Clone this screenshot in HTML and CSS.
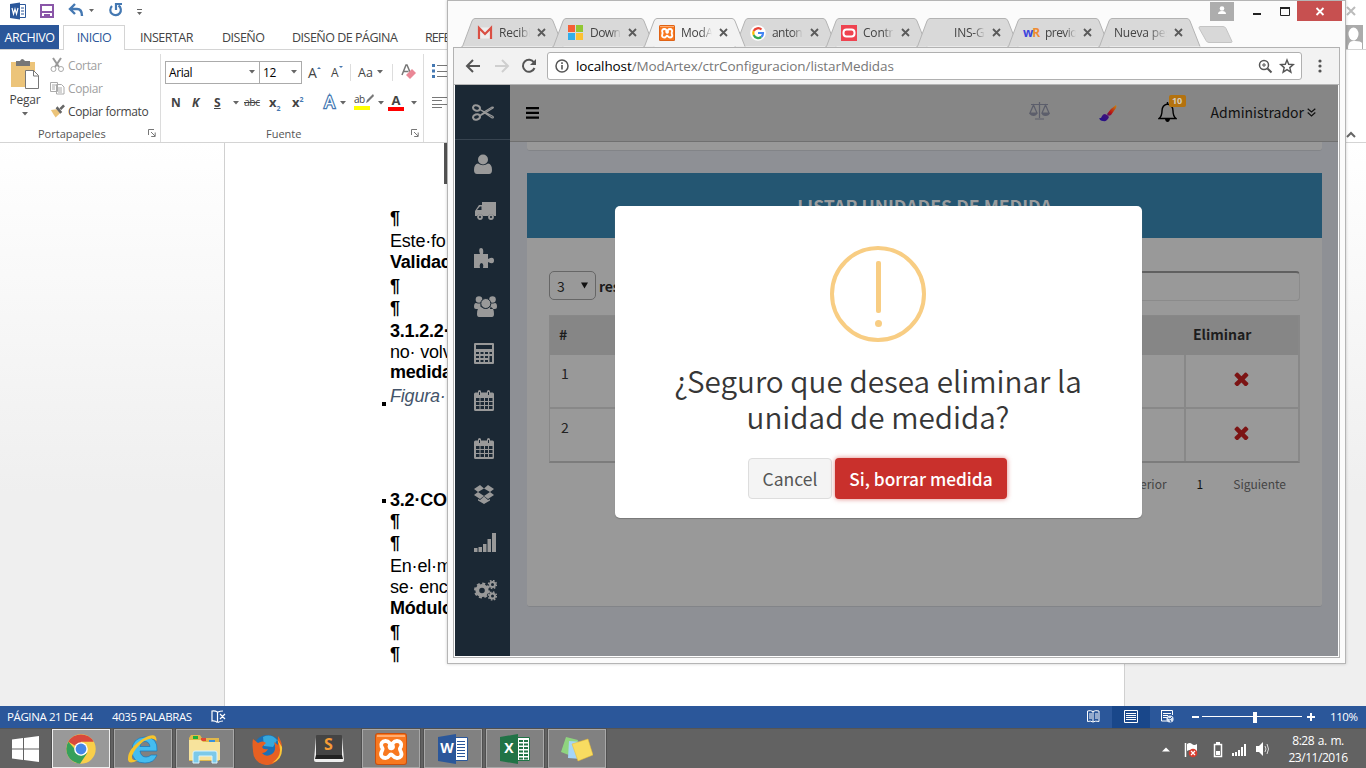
FILE: index.html
```html
<!DOCTYPE html>
<html lang="es">
<head>
<meta charset="utf-8">
<title>Escritorio</title>
<link rel="stylesheet" href="styles.css">
</head>
<body>
<svg width="0" height="0" class="defs" aria-hidden="true">
  <defs>
    <symbol id="caret" viewBox="0 0 7 4"><path d="M0 0h6L3 3.5z" fill="#666"/></symbol>
    <symbol id="close" viewBox="0 0 9 9"><path d="M1 1l7 7M8 1l-7 7" stroke="#5a5a5a" stroke-width="1.8"/></symbol>
    <symbol id="launcher" viewBox="0 0 8 8"><path d="M.5 6V.5H6M3 3l4 4M7.200 3.500v4h-4" fill="none" stroke="#777"/></symbol>
    <symbol id="tab" viewBox="0 0 104 29"><path d="M.5 28.500h1L11 3q1-2.500 3-2.500h75q2 0 3 2.500l10 25.500" stroke="#b3b3b3"/></symbol>
    <symbol id="calendar" viewBox="0 0 20 21"><path d="M0 4q0-1.500 1.500-1.500H4V1.500a1.500 1.500 0 013 0v1h6v-1a1.500 1.500 0 013 0v1h2.500Q20 2.500 20 4v15.500q0 1.500-1.500 1.500h-17Q0 21 0 19.500z" fill="#999"/><path d="M2 8h3.500v3H2zm4.500 0H10v3H6.500zM11 8h3v3h-3zm4 0h3.500v3H15zM2 12h3.500v3H2zm4.500 0H10v3H6.500zm4.500 0h3v3h-3zm4 0h3.500v3H15zM2 16h3.500v3H2zm4.500 0H10v3H6.500zm4.500 0h3v3h-3zm4 0h3.500v3H15zM5 2h1v3H5zm9 0h1v3h-1z" fill="#1b2834"/></symbol>
    <symbol id="times" viewBox="110 110 1200 1200"><path d="M1298 1106q0 40-28 68l-136 136q-28 28-68 28t-68-28l-294-294-294 294q-28 28-68 28t-68-28l-136-136q-28-28-28-68t28-68l294-294-294-294q-28-28-28-68t28-68l136-136q28-28 68-28t68 28l294 294 294-294q28-28 68-28t68 28l136 136q28 28 28 68t-28 68l-294 294 294 294q28 28 28 68z" fill="#7c1414"/></symbol>
    <symbol id="xampp" viewBox="0 0 32 32"><rect width="32" height="32" rx="3" fill="#c94f0d"/><rect x="1" y="1" width="30" height="30" rx="2" fill="#f8781f"/><path d="M2 2h28v2H2z" fill="#ffad72"/><path d="M14.500 13.500C16 11 14 8 10.500 8S5.500 11 6.500 13.500C8 16 8 16 6.500 19c-1.500 4 1 6 4 6 4 0 3.500-3.500 5.500-3.500S18 25 22 25c3.500 0 5.500-2.500 4-6-1.500-3-1.500-3 0-5.500C27 11 25.500 8 22 8s-5.500 3-4 5.500c.5 2-3 3-3.500 0z" fill="none" stroke="#fff" stroke-width="3.800" stroke-linejoin="round"/></symbol>
  </defs>
</svg>

<div class="desktop">
  <section class="word">
    <header class="quickbar">
      <svg width="150" height="22" viewBox="0 0 150 22">
        <path d="M10 4l10-1.500v17L10 18z" fill="#2b579a"/><path d="M20 4.500h5.500v13H20" fill="#fff" stroke="#2b579a"/><path d="M21 8h3m-3 3h3m-3 3h3" stroke="#2b579a"/>
        <path d="M12 8l1.500 6L15 9l1.500 5L18 8" fill="none" stroke="#fff" stroke-width="1.200"/>
        <path d="M41 5h12v12H41z" fill="#fff" stroke="#8a56a8" stroke-width="2"/><path d="M42 11h10v2H42zM44 14h6v4h-6z" fill="#8a56a8"/>
        <path d="M75 4l-5 5 5 5M70 9h7q5 0 5 7" fill="none" stroke="#4478b2" stroke-width="2.400"/>
        <path d="M89 9h5l-2.500 3zM137 12h5l-2.500 3zM137 9h5v1h-5z" fill="#666"/>
        <path d="M112 6a5.300 5.300 0 106.500-.5" fill="none" stroke="#4478b2" stroke-width="2.200"/><path d="M122 4h-6v6" fill="none" stroke="#4478b2" stroke-width="2.200"/>
      </svg>
      <svg width="20" height="22" viewBox="0 0 20 22"><path d="M1 7l8 8m0-8l-8 8" stroke="#bbb" stroke-width="2"/></svg>
    </header>
    <nav class="word-tabs">
      <span class="wt file">ARCHIVO</span><span class="wt home">INICIO</span><span class="wt insert">INSERTAR</span><span class="wt design">DISEÑO</span><span class="wt pagelay">DISEÑO DE PÁGINA</span><span class="wt refs">REFERENCIAS</span>
      <svg class="avatar" width="20" height="24" viewBox="0 0 20 24"><path d="M0 0h17v24H0z" fill="#ababab"/><path d="M2 24q0-8 5-8 3-1 2 0 6 0 7 2v6z" fill="#fff"/><ellipse cx="7.500" cy="9" rx="5" ry="6.500" fill="#fff"/></svg>
    </nav>
    <div class="ribbon">
      <div class="group clip">
        <div class="tools">
          <div class="paste">
            <svg width="30" height="32" viewBox="0 0 30 32"><path d="M1 4h24v25H1z" fill="#ecc47a"/><path d="M6 3h4q2-4 5 0h5v5H6z" fill="#777"/><path d="M15.500 12.500h8l5 5v13h-13z" fill="#fff" stroke="#777"/><path d="M23.500 12v6h5" fill="none" stroke="#777"/></svg>
            <span>Pegar</span><svg class="pc" width="7" height="4"><use href="#caret"/></svg>
          </div>
          <div class="cmds">
            <div class="cmd off"><svg width="15" height="16" viewBox="0 0 15 16"><path d="M3 1l6 9M11 1L5 10" stroke="#999" stroke-width="2"/><circle cx="3.500" cy="12" r="2.500" fill="none" stroke="#aaa"/><circle cx="11" cy="12" r="2.500" fill="none" stroke="#aaa"/></svg><span>Cortar</span></div>
            <div class="cmd off"><svg width="15" height="14" viewBox="0 0 15 14"><path d="M.5 1.500h7v9h-7zM6.500 3.500h5l2.500 2.500v7H6.500z" fill="#fff" stroke="#aaa"/><path d="M2 4h4M2 6h3M2 8h3m3-1h4M8 9h4M8 11h4" stroke="#aaa"/></svg><span>Copiar</span></div>
            <div class="cmd"><svg width="15" height="15" viewBox="0 0 16 15"><path d="M1 6l6-1 4 4-5 5-2-3z" fill="#ecc47a"/><path d="M6 4l2-2 5 6-2 2zM10 4l4-4 2 2-4 4z" fill="#666"/></svg><span>Copiar formato</span></div>
          </div>
        </div>
        <div class="glabel"><span>Portapapeles</span><svg width="8" height="8"><use href="#launcher"/></svg></div>
      </div>
      <div class="group font">
        <div class="frow1">
          <span class="combo face">Arial<svg width="7" height="4"><use href="#caret"/></svg></span><span class="combo size">12<svg width="7" height="4"><use href="#caret"/></svg></span>
          <span class="grow">A<i class="up"></i></span><span class="shrink">A<i class="down"></i></span>
          <span class="case">Aa <svg width="7" height="4"><use href="#caret"/></svg></span>
          <svg class="eraser" width="16" height="16" viewBox="0 0 16 16"><path d="M1 11L5 1h1l3 7M2.500 7.500h5" fill="none" stroke="#777" stroke-width="1.500"/><path d="M5 11l6-6 4 4-6 6z" fill="#ea8796"/></svg>
        </div>
        <div class="frow2">
          <b>N</b><b><em>K</em></b><b class="und">S</b><svg width="7" height="4"><use href="#caret"/></svg><s>abc</s><b class="big">x<sub>2</sub></b><b class="big">x<sup>2</sup></b><span class="effect">A</span><svg width="7" height="4"><use href="#caret"/></svg>
          <span class="mark">ab<svg width="10" height="10" viewBox="0 0 10 10"><path d="M1 9l1-3 6-6 1 2-6 6z" fill="#777"/></svg></span><svg width="7" height="4"><use href="#caret"/></svg><b class="red">A</b><svg width="7" height="4"><use href="#caret"/></svg>
        </div>
        <div class="glabel"><span>Fuente</span><svg width="8" height="8"><use href="#launcher"/></svg></div>
      </div>
      <svg class="para" width="24" height="60" viewBox="0 0 24 60"><path d="M0 2h3v3H0zm0 5.500h3v3H0zM0 13h3v3H0z" fill="#4478b2"/><path d="M5 3.500h12M5 9.500h12M5 14.500h12M0 35.500h16M0 38.500h10M0 42.500h16M0 45.500h10" stroke="#777"/></svg>
      <svg class="collapse" width="10" height="7" viewBox="0 0 10 7"><path d="M1 6l4-4 4 4" fill="none" stroke="#666" stroke-width="2"/></svg>
    </div>
    <div class="canvas">
      <article class="page">
        <div class="band"></div>
        <p class="first"><b>¶</b></p><p class="g1">Este·fo</p><p class="n1"><b>Validac</b></p><p class="g2"><b>¶</b></p><p><b>¶</b></p><p class="g1"><b>3.1.2.2·</b></p><p class="n1">no·&nbsp;volv</p><p class="n2"><b>medida</b></p><p class="g2 fig">Figura·</p>
        <p class="section dot"><b>3.2·CO</b></p><p class="n1"><b>¶</b></p><p><b>¶</b></p><p class="g1">En·el·m</p><p class="n1">se·&nbsp;enc</p><p class="n1"><b>Módulo</b></p><p class="g2"><b>¶</b></p><p><b>¶</b></p>
      </article>
    </div>
    <footer class="status">
      <span class="pg">PÁGINA 21 DE 44</span><span class="words">4035 PALABRAS</span>
      <svg width="16" height="14" viewBox="0 0 16 14"><path d="M6.500 1.500v11M6.500 2Q4 .5 1 1v10q3-.5 5.500 1.500M7 2q2-1 5-1M7 12.500q2-1.500 5-1.500M9 4l5 5m0-5L9 9" fill="none" stroke="#fff" stroke-width="1.200"/></svg>
      <div class="views">
        <svg width="38" height="22" viewBox="0 0 38 22"><path d="M13.500 5q3-1 5.500.5Q21.500 4 25 5v10.500q-3.500-1-6 .5-2.500-1.500-5.500-.5zM19 5v11M15 8h3m-3 2h3m-3 2h3m3-4h3m-3 2h3m-3 2h3" fill="none" stroke="#fff"/></svg>
        <svg class="on" width="38" height="22" viewBox="0 0 38 22"><path d="M12.500 4.500h13v12h-13zM14 7.500h10M14 9.500h10m-10 2h10m-10 2h10" fill="none" stroke="#fff"/></svg>
        <svg width="38" height="22" viewBox="0 0 38 22"><path d="M11 4.500h11.500V9M11.500 4v11h6M13 7.500h8m-8 2h5m-5 2h4" fill="none" stroke="#fff"/><circle cx="20" cy="13" r="3.600" fill="#dce6f4"/><path d="M18 12l2 1 2-2m-2 3l1 2" fill="none" stroke="#2b579a"/></svg>
        <svg width="130" height="22" viewBox="0 0 130 22"><path d="M4 10h7v2H4zm115 0h8v2h-8zm3-3h2v8h-2zM65 6h4v11h-4z" fill="#fff"/><path d="M14 10.500h100" stroke="#fff"/></svg>
      </div>
      <span class="zoom">110%</span>
    </footer>
  </section>

  <section class="chrome">
    <div class="strip">
      <div class="tabs">
        <div class="tab"><svg class="shape"><use href="#tab"/></svg><svg class="fav" width="16" height="16" viewBox="0 0 16 16"><path d="M1 2.500h14v11H1z" fill="#eee"/><path d="M2 14V3l6 6 6-6v11" fill="none" stroke="#da4f43" stroke-width="2.200"/></svg><span class="t">Recibidos</span><svg class="x"><use href="#close"/></svg></div>
        <div class="tab"><svg class="shape"><use href="#tab"/></svg><svg class="fav" width="16" height="16" viewBox="0 0 16 16"><path d="M0 0h7v7H0z" fill="#f65f35"/><path d="M8 0h7v7H8z" fill="#91c733"/><path d="M0 8h7v7H0z" fill="#32aeea"/><path d="M8 8h7v7H8z" fill="#fdc131"/></svg><span class="t tight">Download</span><svg class="x"><use href="#close"/></svg></div>
        <div class="tab active"><svg class="shape"><use href="#tab"/></svg><svg class="fav" width="16" height="16"><use href="#xampp"/></svg><span class="t">ModArtex</span><svg class="x"><use href="#close"/></svg></div>
        <div class="tab"><svg class="shape"><use href="#tab"/></svg><svg class="fav" width="16" height="16" viewBox="0 0 16 16"><circle cx="8" cy="8" r="7.800" fill="#fff"/><g fill="none" stroke-width="2.200"><path d="M11.500 4.500A5 5 0 003.700 6" stroke="#ea4335"/><path d="M3.700 6a5 5 0 000 4" stroke="#fbbc05"/><path d="M3.700 10a5 5 0 007.600 2" stroke="#34a853"/><path d="M11.300 12A5 5 0 0013 8H8" stroke="#4285f4"/></g></svg><span class="t tight">antonio m</span><svg class="x"><use href="#close"/></svg></div>
        <div class="tab"><svg class="shape"><use href="#tab"/></svg><svg class="fav" width="16" height="16" viewBox="0 0 16 16"><path d="M0 0h16v16H0z" fill="#ef4350"/><rect x="2.500" y="4.500" width="11" height="7" rx="3" fill="none" stroke="#fff" stroke-width="2"/></svg><span class="t">Controlar</span><svg class="x"><use href="#close"/></svg></div>
        <div class="tab"><svg class="shape"><use href="#tab"/></svg><span class="fav"></span><span class="t">INS-GUIA</span><svg class="x"><use href="#close"/></svg></div>
        <div class="tab"><svg class="shape"><use href="#tab"/></svg><span class="fav wr"><i>w</i>R</span><span class="t tight">previous</span><svg class="x"><use href="#close"/></svg></div>
        <div class="tab plain"><svg class="shape"><use href="#tab"/></svg><span class="t">Nueva pestaña</span><svg class="x"><use href="#close"/></svg></div>
        <svg class="newtab" width="36" height="18" viewBox="0 0 36 18"><path d="M2 .5h23q2 0 3 2l6 13q0 1-1 1H11q-2 0-3-2L1 2q0-1.500 1-1.500z" fill="#d8d8d8" stroke="#c4c4c4"/></svg>
      </div>
      <div class="winctl">
        <svg width="133" height="20" viewBox="0 0 133 20"><path d="M0 1h24v19H0z" fill="#adadad"/><circle cx="12" cy="7.500" r="2.300" fill="#fff"/><path d="M8 13q0-3 4-3t4 3z" fill="#fff"/><path d="M43 12h8v2h-8z" fill="#222"/><path d="M70.500 7v7.500h9V7" fill="none" stroke="#222"/><path d="M70 6h10v2H70z" fill="#222"/><path d="M87 0h45v20H87z" fill="#c75050"/><path d="M106.500 7l7 7m0-7l-7 7" stroke="#fff" stroke-width="1.800"/></svg>
      </div>
    </div>
    <div class="frame">
      <div class="toolbar">
        <svg width="93" height="36" viewBox="0 0 93 36"><path d="M26 18H13m6-6l-6 6 6 6" fill="none" stroke="#555" stroke-width="2"/><path d="M41 18h13m-6-6l6 6-6 6" fill="none" stroke="#cfcfcf" stroke-width="2"/><path d="M80 14.500a6 6 0 10.500 5.500" fill="none" stroke="#555" stroke-width="2"/><path d="M82 11v6h-6z" fill="#555"/></svg>
        <div class="omni">
          <svg width="14" height="14" viewBox="0 0 14 14"><circle cx="7" cy="7" r="6" fill="none" stroke="#555" stroke-width="1.500"/><path d="M6.200 6h1.600v4.500H6.200zM6.200 3.300h1.600V5H6.200z" fill="#555"/></svg>
          <span class="url"><b>localhost</b>/ModArtex/ctrConfiguracion/listarMedidas</span>
          <svg width="38" height="16" viewBox="0 0 38 16"><circle cx="7" cy="7" r="4.500" fill="none" stroke="#555" stroke-width="1.500"/><path d="M10.500 10.500l4 4" stroke="#555" stroke-width="2"/><path d="M5 7h4M7 5v4" stroke="#555"/><path d="M30 2l1.700 4.300 4.600.3-3.500 3 1.100 4.600L30 11.700l-3.900 2.500 1.100-4.600-3.500-3 4.600-.3z" fill="none" stroke="#555" stroke-width="1.400"/></svg>
        </div>
        <svg class="dots" width="4" height="16" viewBox="0 0 4 16"><circle cx="2" cy="3" r="1.600" fill="#555"/><circle cx="2" cy="8" r="1.600" fill="#555"/><circle cx="2" cy="13" r="1.600" fill="#555"/></svg>
      </div>
      <div class="app">
        <aside class="side">
          <div class="logo"><svg width="22" height="17" viewBox="0 0 22 17"><g fill="none" stroke="#999" stroke-width="2"><ellipse cx="4.500" cy="4" rx="3.500" ry="2.600" transform="rotate(20 4.500 4)"/><ellipse cx="4.500" cy="13" rx="3.500" ry="2.600" transform="rotate(-20 4.500 13)"/></g><path d="M7 5l5 3 8-5q2 0 1 1l-8 5-6 3.500M7 12l5-3.500 8 5.500q2 0 1-1.500L7 5" fill="none" stroke="#999" stroke-width="1.200"/></svg></div>
          <div class="item"><svg class="u" width="18" height="20" viewBox="0 0 18 20"><circle cx="9" cy="5.500" r="5" fill="#999"/><path d="M0 16q0-6 4-6.500 5 3.500 10 0 4 .5 4 6.500 0 4-3 4H3q-3 0-3-4z" fill="#999"/></svg></div>
          <div class="item"><svg width="22" height="18" viewBox="0 0 22 18"><path d="M8 0h14v14h-2a3.500 3.500 0 00-6 0H9a3.500 3.500 0 00-6 0H1V9l4-6h3z" fill="#999"/><path d="M3 8l3-3.500h1.500V8z" fill="#1b2834"/><circle cx="6" cy="15" r="2" fill="none" stroke="#999" stroke-width="1.800"/><circle cx="17" cy="15" r="2" fill="none" stroke="#999" stroke-width="1.800"/></svg></div>
          <div class="item up1"><svg width="20" height="20" viewBox="0 0 20 20"><path d="M0 6h6Q4 0 7 0t2 6h5v5q6-3 6 1.500T14 14v6H9q1-5-1.500-5T6 20H0z" fill="#999"/></svg></div>
          <div class="item"><svg width="23" height="21" viewBox="0 0 23 21"><g fill="#999"><circle cx="5" cy="3.500" r="3.300"/><circle cx="18.500" cy="3.500" r="3.300"/><path d="M0 11q0-4 2-4 4 1 5 0-1 3 0 6H2q-2 0-2-2zM23 11q0-4-2-4-4 1-5 0 1 3 0 6h5q2 0 2-2zM3 18q0-7 4-7 4.500 3 9 0 4 0 4 7 0 3-2 3H5q-2 0-2-3z"/><circle cx="11.800" cy="7.500" r="5" stroke="#1b2834"/></g></svg></div>
          <div class="item"><svg width="20" height="21" viewBox="0 0 20 21"><path d="M0 1q0-1 1-1h18q1 0 1 1v19q0 1-1 1H1q-1 0-1-1z" fill="#999"/><path d="M2 2h16v4H2zM2 9h3v2H2zm4.500 0h3v2h-3zM11 9h3v2h-3zm4.500 0H18v2h-2.500zM2 13h3v2H2zm4.500 0h3v2h-3zm4.500 0h3v2h-3zm4.500 0H18v6h-2.500zM2 17h3v2H2zm4.500 0h3v2h-3zm4.500 0h3v2h-3z" fill="#1b2834"/></svg></div>
          <div class="item up1"><svg width="20" height="21"><use href="#calendar"/></svg></div>
          <div class="item"><svg width="20" height="21"><use href="#calendar"/></svg></div>
          <div class="item box"><svg width="20" height="19" viewBox="0 0 20 19"><path d="M6 0l4 3.500L4 7 0 4zM14 0l-4 3.500L16 7l4-3zM0 10l4-3 6 4-4 3zM20 10l-4-3-6 4 4 3zM4 14l2 1 4-3.500 4 3.500 2-1v1.500L10 19l-6-3.500z" fill="#999"/></svg></div>
          <div class="item up1"><svg width="22" height="19" viewBox="0 0 22 19"><path d="M0 15h3.500v4H0zm4.500-1H8v5H4.500zM9 11h3.500v8H9zm4.500-5H17v13h-3.500zM18 0h4v19h-4z" fill="#999"/></svg></div>
          <div class="item up1"><svg width="23" height="21" viewBox="0 0 23 21"><g fill="none" stroke="#999"><circle cx="8" cy="10.500" r="4.700" stroke-width="3.800"/><circle cx="8" cy="10.500" r="7" stroke-width="2" stroke-dasharray="3 2.500"/><circle cx="18.500" cy="4.500" r="2.500" stroke-width="2"/><circle cx="18.500" cy="4.500" r="4" stroke-width="1.500" stroke-dasharray="1.600 1.540"/><circle cx="18.500" cy="16" r="2.500" stroke-width="2"/><circle cx="18.500" cy="16" r="4" stroke-width="1.500" stroke-dasharray="1.600 1.540"/></g></svg></div>
        </aside>
        <main class="main">
          <div class="topbar">
            <svg width="13" height="12" viewBox="0 0 13 12"><path d="M0 0h13v2.200H0zm0 4.700h13v2.200H0zm0 4.800h13v2.200H0z" fill="#000"/></svg>
            <div class="right">
              <svg class="scale" width="21" height="18" viewBox="0 0 21 18"><path d="M10.500 0v16M2 2.500h17M6 17h9M4.500 3L1 11h7zM16.500 3L13 11h7z" fill="none" stroke="#5c5e6b" stroke-width="1.200"/><path d="M0 11h8.500q-1 3-4 3t-4.500-3zM12.500 11H21q-1 3-4.500 3t-4-3z" fill="#5c5e6b"/></svg>
              <svg class="brush" width="18" height="17" viewBox="0 0 18 17"><defs><linearGradient id="br" x1="0" y1="1" x2="1" y2="0"><stop offset="0" stop-color="#1b118c"/><stop offset=".4" stop-color="#41107b"/><stop offset=".6" stop-color="#b81212"/><stop offset="1" stop-color="#c88a10"/></linearGradient></defs><path d="M17 0q1 1 0 3l-5 7q-3 2-4-1Q12 3 17 0zM6 9q3 1 4 3-2 5-6 4-3 0-4-3 2 1 3-2 1-2 3-2z" fill="url(#br)"/></svg>
              <div class="bell"><svg width="19" height="21" viewBox="0 0 19 21"><path d="M9.500 0v2M9.500 2Q4 3 4 9q0 5-3 7.500h17Q15 14 15 9q0-6-5.500-7z" fill="none" stroke="#000" stroke-width="1.400"/><path d="M7 17h5q-.5 3-2.500 3T7 17z"/></svg><span class="badge">10</span></div>
              <span class="admin">Administrador</span>
              <svg class="chev" width="9" height="9" viewBox="0 0 9 9"><path d="M.7.700l3.800 3.300L8.300.7M.7 4.500l3.800 3.500 3.800-3.500" fill="none" stroke="#111" stroke-width="1.200"/></svg>
            </div>
          </div>
          <div class="stub"></div>
          <div class="panel">
            <h3 class="ptitle">LISTAR UNIDADES DE MEDIDA</h3>
            <div class="pbody">
              <div class="filter"><div class="select">3<svg width="7" height="7" viewBox="0 0 8 7"><path d="M0 0h8L4 7z" fill="#111"/></svg></div><b>resultados</b><div class="search"></div></div>
              <div class="grid">
                <div class="th first-col">#</div><div class="th"></div><div class="th last">Eliminar</div>
                <div class="td">1</div><div class="td"></div><div class="td act"><svg width="15" height="14"><use href="#times"/></svg></div>
                <div class="td">2</div><div class="td"></div><div class="td act"><svg width="15" height="14"><use href="#times"/></svg></div>
              </div>
              <div class="pager"><span>Anterior</span><span class="cur">1</span><span>Siguiente</span></div>
            </div>
          </div>
        </main>
      </div>
    </div>
    <div class="modal">
      <div class="warn"><span class="bar"></span><span class="pt"></span></div>
      <h2>¿Seguro que desea eliminar la<br>unidad de medida?</h2>
      <div class="btns"><span class="btn cancel">Cancel</span><span class="btn ok">Si, borrar medida</span></div>
    </div>
  </section>

  <footer class="taskbar">
    <div class="start"><svg width="27" height="26" viewBox="0 0 27 26"><path d="M0 3.500l11-1.500v10.500H0zM12 2l15-2v12.500H12zM0 13.500h11V24L0 22.500zM12 13.500h15V26l-15-2z" fill="#fff"/></svg></div>
    <div class="task cur"><svg width="30" height="30" viewBox="0 0 30 30"><circle cx="15" cy="15" r="14.700" fill="#f9cf4a"/><path d="M15 15L2.300 7.700A14.700 14.700 0 0127.700 7.700H15z" fill="#d9493c"/><path d="M2.300 7.700A14.700 14.700 0 0014 29.700l7.400-11-6.400 3z" fill="#35a05b"/><circle cx="15" cy="15" r="6.800" fill="#fff"/><circle cx="15" cy="15" r="5.400" fill="#4587e8"/></svg></div>
    <div class="task open"><svg width="32" height="32" viewBox="0 0 32 32"><path d="M30 18H13q1 6 6 6 3 0 5-2h6q-3 8-12 8Q5 30 5 17.500T18 4q13 0 12 14zM13 13.500h10q-1-5-5-5-4 0-5 5z" fill="#45bdf0" stroke="#1679bd" stroke-width=".7"/><path d="M29.500 8q.5-10-13-2.500Q0 16 1 27q1 5 10 0-7 1-6-4 2-7 12-15 9-5 12.500 0z" fill="#f6c42c"/></svg></div>
    <div class="task open"><svg width="34" height="32" viewBox="0 0 34 32"><path d="M1 5l2-3h9l2 3h17v23H1z" fill="#e0b84b"/><path d="M5 3h5v3H5z" fill="#1eb13a"/><path d="M13 5h5v3h-5z" fill="#e04a34"/><path d="M21 7h6v3h-6z" fill="#3991dc"/><path d="M1 7h12l2 2h17v18H1z" fill="#f7e39c"/><path d="M5 30V20q0-2 2-2h20q2 0 2 2v10h-5v-7H11v7z" fill="#7cc9e9" stroke="#d9f4ff"/></svg></div>
    <div class="task"><svg width="32" height="32" viewBox="0 0 32 32"><circle cx="16.500" cy="16" r="14" fill="#1c6fb4"/><path d="M12 4q8-4 14 3l-4 7-9-1z" fill="#36a8dd"/><path d="M2 6l5 4q5-3 8 0l-4 4q1 3 6 2-2 4-6 4 4 5 10 1 5-4 2-12l4 3V3q6 9 3 16a14 14 0 01-28-2Q1 11 2 6z" fill="#e66022"/><path d="M26 6q8 16-5 24 11-3 10-16z" fill="#fbc737"/></svg></div>
    <div class="task"><svg width="32" height="30" viewBox="0 0 32 30"><path d="M3 3h26l2 23q0 2-2 2H3q-2 0-2-2z" fill="#eee"/><path d="M4 1h24q1 0 1 1v20H3V2q0-1 1-1z" fill="#444"/><path d="M3 21h26l1 4H2z" fill="#222"/></svg><span class="sub">S</span></div>
    <div class="task open"><svg width="32" height="32"><use href="#xampp"/></svg></div>
    <div class="task open"><svg width="30" height="30" viewBox="0 0 30 30"><path d="M16 3.500h13.500v23H16z" fill="#fff" stroke="#2b579a"/><path d="M19 7.500h8m-8 3h8m-8 3h8m-8 3h8m-8 3h8m-8 3h8" stroke="#2b579a"/><path d="M0 3l18-3v30L0 27z" fill="#2b579a"/></svg><span class="ltr">W</span></div>
    <div class="task open"><svg width="30" height="30" viewBox="0 0 30 30"><path d="M16 3.500h13.500v23H16z" fill="#fff" stroke="#217346"/><path d="M19 7h9m-9 3.500h9m-9 3.500h9m-9 3.500h9M19 21h9m-9 3.500h9" stroke="#217346" stroke-width="2" stroke-dasharray="4 1"/><path d="M0 3l18-3v30L0 27z" fill="#217346"/></svg><span class="ltr">X</span></div>
    <div class="task open"><svg width="32" height="26" viewBox="0 0 32 26"><path d="M5 1l12 3-4 17-13-5z" fill="#8fd47f"/><path d="M8 5l13 1-1 17-13-1z" fill="#a5d5f7"/><path d="M11 8l16-5 5 16-15 6z" fill="#f8dc61" stroke="#e8bb30" stroke-width=".5"/></svg></div>
    <div class="tray">
      <svg width="110" height="20" viewBox="0 0 110 20"><path d="M1 12.500l4-4 4 4z" fill="#fff"/><path d="M24.500 4v14" stroke="#fff" stroke-width="1.500"/><path d="M26 5q3-2 5 0t5 0v8q-3 1-5-1t-5 0z" fill="#fff"/><circle cx="32" cy="14" r="4.300" fill="#d83c2e"/><path d="M30 12l4 4m0-4l-4 4" stroke="#fff" stroke-width="1.200"/><path d="M53.500 5.500h7v12h-7z" fill="none" stroke="#fff" stroke-width="1.500"/><path d="M55 3h4v2h-4zM55 12h4v4h-4z" fill="#fff"/><path d="M71 14h2v3h-2zm3-1h2v4h-2zm3-2h2v6h-2zm3-3h2v9h-2zm3-3h2v12h-2z" fill="#fff"/><path d="M95 7h3l4-4v14l-4-4h-3z" fill="#fff"/><path d="M104 7q2 3 0 6m2-8q3 5 0 10" fill="none" stroke="#ddd"/></svg>
      <div class="clock"><span class="time">8:28 a. m.</span><span>23/11/2016</span></div>
    </div>
  </footer>
</div>
</body>
</html>
```

FILE: styles.css
```css
* { box-sizing: border-box; }
body { margin: 0; font-family: "Open Sans", sans-serif; }
.defs { position: absolute; }
svg { display: block; flex: none; }
.desktop { position: relative; width: 1366px; height: 768px; overflow: hidden; display: flex; flex-direction: column; background: #fff; }

/* Word */
.word { height: 728px; display: flex; flex-direction: column; color: #444; }
.quickbar { height: 25px; display: flex; justify-content: space-between; }
.word-tabs { height: 25px; display: flex; border-bottom: 1px solid #d4d4d4; font-size: 12.500px; line-height: 25px; white-space: nowrap; }
.wt { letter-spacing: -.5px; flex: none; }
.file { width: 59px; background: #2b579a; color: #fff; text-align: center; }
.home { width: 62px; margin-left: 4px; height: 25px; background: #fff; color: #2b579a; border: 1px solid #d4d4d4; border-bottom: 0; text-align: center; line-height: 24px; }
.insert { width: 82px; padding-left: 15px; }
.design { width: 70px; padding-left: 15px; }
.pagelay { width: 133px; padding-left: 15px; }
.refs { width: 100px; padding-left: 15px; letter-spacing: -.9px; }
.avatar { margin-left: auto; }
.ribbon { height: 93px; display: flex; border-bottom: 1px solid #d4d4d4; font-size: 12px; }
.group { display: flex; flex-direction: column; border-right: 1px solid #dcdcdc; height: 88px; margin-top: 4px; }
.clip { width: 161px; }
.tools { display: flex; height: 70px; }
.paste { width: 50px; display: flex; flex-direction: column; align-items: center; padding-top: 4px; gap: 1px; letter-spacing: -.2px; line-height: 17px; }
.pc { margin-top: 3px; }
.cmds { display: flex; flex-direction: column; }
.cmd { height: 23px; display: flex; align-items: center; gap: 3px; letter-spacing: -.35px; white-space: nowrap; padding-bottom: 1px; }
.off { color: #a0a0a0; }
.glabel { height: 18px; display: flex; align-items: center; justify-content: space-between; padding-left: 38px; padding-right: 4px; font-size: 11px; margin-top: auto; color: #555; }
.font { width: 263px; }
.font .glabel { padding-left: 105px; }
.frow1 { display: flex; align-items: center; height: 22px; margin: 7px 0 0 4px; }
.combo { height: 23px; border: 1px solid #ababab; display: flex; align-items: center; justify-content: space-between; padding: 0 3px; color: #000; letter-spacing: -.4px; }
.face { width: 95px; }
.size { width: 43px; margin-left: -1px; }
.grow { display: flex; font-size: 14px; margin-left: 6px; width: 23px; }
.shrink { display: flex; font-size: 12px; width: 19px; }
.up, .down { width: 0; height: 0; border: 2.500px solid transparent; margin-top: 2px; }
.up { border-bottom-color: #4478b2; }
.down { border-top-color: #4478b2; }
.case { display: flex; align-items: center; gap: 4px; border-left: 1px solid #ddd; border-right: 1px solid #ddd; padding-left: 7px; width: 43px; font-size: 12.500px; }
.eraser { margin-left: 8px; }
.frow2 { display: grid; grid-template-columns: 22px 22px 19px 11px 25px 23px 27px 21px 14px 24px 10px 23px 8px; align-items: center; height: 24px; margin: 7px 0 0 9px; font-size: 12px; }
.frow2 > svg { margin-top: 2px; }
.frow2 > b:first-child { padding-left: 1px; }
.frow2 s { font-size: 10.500px; letter-spacing: -.5px; }
.frow2 .big { font-size: 13px; }
.frow2 sub, .frow2 sup { font-size: 7px; color: #4478b2; line-height: 0; }
.und { text-decoration: underline; }
.effect { justify-self: center; font-size: 16px; color: #fff; -webkit-text-stroke: 2.500px #4478b2; paint-order: stroke; }
.mark { display: flex; width: 16px; height: 16px; border-bottom: 4px solid #ff0; font-size: 10px; line-height: 10px; letter-spacing: -.5px; }
.red { width: 16px; height: 17px; border-bottom: 4px solid #f00; line-height: 13px; text-align: center; font-size: 13px; }
.para { margin: 12px 0 0 8px; }
.collapse { margin: 81px 10px 0 auto; }
.canvas { flex: 1; background: linear-gradient(#fff, #efefef 350px); display: flex; min-height: 0; }
.page { margin-left: 224px; width: 901px; background: #fff; border: 1px solid #d0d0d0; border-width: 0 1px; padding-left: 165px; font: 18px/22px "Liberation Sans", Arial, sans-serif; color: #000; overflow: hidden; }
.page p { margin: 0; height: 22px; letter-spacing: -.2px; white-space: nowrap; }
.band { width: 4px; height: 41px; background: #555; margin-left: 54px; }
.page .first { margin-top: 23px; }
.page .g1 { margin-top: 1px; }
.page .g2 { margin-top: 2px; }
.page .n1 { margin-top: -1px; }
.page .n2 { margin-top: -2px; }
.fig { font-style: italic; color: #44546a; }
.page .section { margin-top: 82px; }
.section::before, .fig::before { content: ""; display: inline-block; width: 4px; height: 4px; background: #000; margin-left: -8px; margin-right: 4px; vertical-align: 3px; }
.fig::before { vertical-align: -4px; }
.status { height: 22px; background: #2b579a; color: #fff; display: flex; align-items: center; font-size: 11.500px; letter-spacing: -.4px; line-height: 20px; padding-bottom: 1px; }
.pg { width: 105px; margin-left: 7px; }
.words { width: 99px; }
.views { display: flex; margin-left: auto; height: 22px; margin-bottom: -1px; }
.on { background: #19478a; }
.zoom { width: 48px; padding-left: 12px; }

/* Browser window */
.chrome { position: absolute; left: 447px; top: 0; width: 899px; height: 664px; background: #fbfbfb; border: 1px solid #b5b5b5; display: flex; flex-direction: column; padding: 0 5px; box-shadow: 0 0 3px rgba(0,0,0,.2); }
.strip { height: 46px; display: flex; padding-left: 8px; padding-right: 2px; }
.tabs { display: flex; align-items: flex-end; width: 740px; flex: none; }
.tab { position: relative; width: 104px; height: 29px; margin-right: -13px; display: flex; align-items: center; padding-left: 16px; fill: #d9d9d9; flex: none; }
.active { z-index: 1; fill: #f2f2f2; }
.shape { position: absolute; inset: 0; width: 104px; height: 29px; }
.fav { position: relative; width: 16px; height: 16px; margin-right: 6px; fill: none; flex: none; }
.wr { font: bold 12px/16px "Open Sans", sans-serif; color: #ef8c32; letter-spacing: -1px; }
.wr i { color: #3c45dd; font-style: normal; }
.t { position: relative; width: 31px; font-size: 12px; letter-spacing: -.2px; overflow: hidden; white-space: nowrap; color: #444; flex: none; -webkit-mask-image: linear-gradient(90deg, #000 65%, transparent); }
.tight { letter-spacing: -.55px; }
.plain .t { width: 53px; }
.x { position: relative; width: 9px; height: 9px; margin-left: 7px; }
.newtab { margin: 0 0 3px 9px; }
.winctl { width: 133px; margin-left: auto; margin-right: -5px; }
.frame { border: 1px solid #b2b2b2; height: 611px; width: 887px; padding: 0 1px 1px; background: #fff; display: flex; flex-direction: column; flex: none; }
.toolbar { height: 37px; background: #f2f2f2; margin: 0 -1px; display: flex; align-items: center; border-bottom: 1px solid #b5b5b5; }
.omni { width: 755px; height: 28px; border: 1px solid #b0b0b0; border-radius: 3px; background: #fff; display: flex; align-items: center; padding: 0 6px 0 7px; }
.url { margin-left: 7px; flex: 1; color: #777; font-size: 13.500px; letter-spacing: -.1px; }
.url b { color: #000; font-weight: 400; }
.dots { margin-left: 16px; }
.app { flex: 1; display: flex; min-height: 0; font-family: "Noto Sans CJK SC", sans-serif; background: #8e9095; }
.side { width: 55px; flex: none; background: #1b2834; display: flex; flex-direction: column; }
.logo { height: 55px; flex: none; border-bottom: 1px solid #384450; display: flex; align-items: center; padding-left: 17px; }
.item { height: 47.500px; flex: none; display: flex; align-items: center; padding-left: 19px; }
.up1 { padding-bottom: 2px; }
.box { padding-bottom: 3px; }
.main { flex: 1; min-width: 0; display: flex; flex-direction: column; }
.topbar { height: 57px; background: #868686; border-bottom: 1px solid #707070; display: flex; align-items: center; justify-content: space-between; padding: 0 22px 0 16px; }
.right { display: flex; align-items: center; }
.scale { margin-right: 49px; margin-top: -4px; }
.brush { margin-right: 41px; }
.bell { position: relative; margin-right: 34px; top: -1px; }
.badge { position: absolute; left: 11px; top: -7px; width: 17px; height: 12px; border-radius: 2px; background: #b4720e; color: #d5ccbd; font: bold 9px/12px "Open Sans", sans-serif; text-align: center; }
.admin { font-size: 14px; color: #111; line-height: 20px; padding-bottom: 2px; }
.chev { margin-left: 3px; margin-top: -1px; }
.stub { height: 9px; margin: 0 16px 0 17px; background: #999; border-bottom: 1px solid #828488; border-radius: 0 0 3px 3px; }
.panel { margin: 22px 16px 0 17px; height: 434px; background: #999; border-bottom: 1px solid #828488; border-radius: 0 0 3px 3px; }
.ptitle { margin: 0; height: 65px; background: #245672; color: #9a9c9e; text-align: center; font-size: 17.700px; line-height: 64px; font-weight: 700; }
.pbody { padding: 33px 22px 0 22px; }
.filter { display: flex; align-items: center; height: 30px; font-size: 14px; line-height: 20px; color: #1b1b1b; letter-spacing: -.2px; }
.select { width: 47px; height: 29px; border: 1px solid #666; border-radius: 5px; display: flex; align-items: center; justify-content: space-between; padding: 0 7px; margin-right: 3px; margin-top: -1px; }
.search { margin-left: auto; width: 300px; height: 30px; border: 1px solid #8b8b8b; border-top: 2px solid #606060; border-radius: 4px; }
.grid { display: grid; grid-template-columns: 400px 236px 113px; grid-template-rows: 39px 54px 54px; margin-top: 14px; border: 1px solid #888; border-right-width: 2px; border-bottom: 2px solid #7c7c7c; font-size: 14px; color: #222; height: 148px; overflow: hidden; }
.th { background: #868686; line-height: 36px; font-weight: 700; color: #1d1d1d; }
.first-col { padding-left: 9px; }
.last { padding-left: 7px; }
.td { border-right: 2px solid #888; border-bottom: 2px solid #888; padding: 8px 0 0 11px; line-height: 21px; }
.act { border-right: 0; padding: 17px 0 0 48px; }
.pager { display: flex; justify-content: flex-end; padding-right: 14px; margin-top: 11px; font-size: 12px; color: #444; line-height: 20px; }
.cur { color: #111; }
.pager .cur { margin: 0 30px; }

/* Confirmation dialog */
.modal { position: absolute; left: 167px; top: 205px; width: 527px; height: 312px; background: #fff; border-radius: 5px; padding: 40px 1px 0 0; display: flex; flex-direction: column; align-items: center; font-family: "Noto Sans CJK SC", sans-serif; box-shadow: 0 1px 1px #777; }
.warn { width: 96px; height: 96px; border: 4px solid #f8cd83; border-radius: 50%; display: flex; flex-direction: column; align-items: center; padding-top: 11px; gap: 7px; }
.bar { width: 5px; height: 52px; border-radius: 2px; background: #f8cd83; }
.pt { width: 7px; height: 7px; border-radius: 50%; background: #f8cd83; }
.modal h2 { margin: 21px 0 0; text-align: center; font-size: 29.700px; font-weight: 350; line-height: 36px; color: #363636; white-space: nowrap; }
.btns { display: flex; gap: 3px; margin: 23px 1px 0 0; }
.btn { height: 41px; border-radius: 4px; display: flex; align-items: center; justify-content: center; line-height: 24px; padding-top: 1px; }
.cancel { width: 84px; background: #f4f4f4; border: 1px solid #ddd; color: #555; font-size: 17.500px; }
.ok { width: 172px; background: #c9302c; color: #fff; font-weight: 500; font-size: 17.300px; box-shadow: 0 0 5px rgba(201,48,44,.6); }

/* Taskbar */
.taskbar { height: 40px; background: #626262; display: flex; align-items: center; border-top: 1px solid #555; }
.start { width: 52px; padding-left: 12px; }
.task { position: relative; width: 58px; height: 39px; margin-right: 4px; display: flex; align-items: center; justify-content: center; flex: none; }
.task.open { background: #818181; border: 1px solid #a8a8a8; outline: 1px solid #505050; }
.task.cur { background: #999; border: 1px solid #eee; outline: 1px solid #505050; }
.sub, .ltr { position: absolute; color: #fff; font: bold 14px/16px "Open Sans", sans-serif; }
.sub { top: 7px; left: 24px; color: #f59b35; font-size: 16px; }
.ltr { left: 15px; top: 10px; width: 14px; text-align: center; }
.tray { margin-left: auto; display: flex; align-items: center; }
.clock { width: 95px; display: flex; flex-direction: column; align-items: center; font-size: 12px; line-height: 17px; color: #fff; letter-spacing: -.45px; padding-right: 1px; }
.time { word-spacing: 1px; }
```
